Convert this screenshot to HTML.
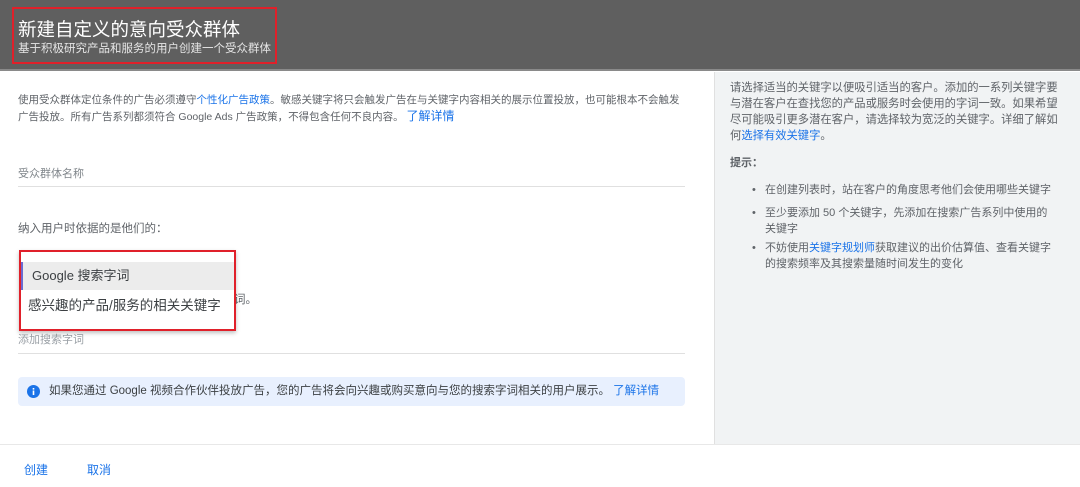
<!DOCTYPE html>
<html><head><meta charset="utf-8"><style>
*{margin:0;padding:0;box-sizing:border-box}
body{width:1080px;height:487px;overflow:hidden;background:#fff;font-family:"Liberation Sans","Noto Sans CJK SC",sans-serif;color:#5f6368;position:relative}
.hdr{position:absolute;left:0;top:0;width:1080px;height:71px;background:#5f5f5f;border-bottom:2px solid #8a8a8a}
.hbox{position:absolute;left:12px;top:7px;width:265px;height:57px;border:2px solid #e0202a}
.t1{position:absolute;left:18px;top:16px;font-size:18.5px;color:#fff;white-space:nowrap}
.t2{position:absolute;left:18px;top:40px;font-size:11.5px;color:#e6e6e6;white-space:nowrap}
.side{position:absolute;left:714px;top:72px;width:366px;height:373px;background:#f1f3f4;border-left:1px solid #e0e0e0}
.a{color:#1a73e8}
.p{position:absolute;font-size:11px;line-height:17px;white-space:nowrap}
.line{position:absolute;left:18px;width:667px;height:1px;background:#e0e0e0}
.foot{position:absolute;left:0;top:444px;width:1080px;height:1px;background:#e8e8e8}
.dd{position:absolute;left:19px;top:250px;width:217px;height:81px;background:#fff;border:2px solid #e0202a;box-shadow:0 2px 4px rgba(0,0,0,.25)}
.sel{position:absolute;left:0;top:10px;width:213px;height:28px;background:#ececec;border-left:2px solid #6b6bd0}
.info{position:absolute;left:18px;top:377px;width:667px;height:29px;background:#e8f0fe;border-radius:4px}
</style></head><body>
<div class="hdr"><div class="hbox"></div><div class="t1">新建自定义的意向受众群体</div><div class="t2">基于积极研究产品和服务的用户创建一个受众群体</div></div>
<div class="p" style="left:18px;top:92px;font-size:10.5px">使用受众群体定位条件的广告必须遵守<span class="a">个性化广告政策</span>。敏感关键字将只会触发广告在与关键字内容相关的展示位置投放，也可能根本不会触发</div>
<div class="p" style="left:18px;top:108px;font-size:10.5px">广告投放。所有广告系列都须符合 Google Ads 广告政策，不得包含任何不良内容。 <span class="a" style="font-size:12px">了解详情</span></div>
<div class="p" style="left:18px;top:166px;color:#80868b">受众群体名称</div>
<div class="line" style="top:186px"></div>
<div class="p" style="left:18px;top:221px;font-size:11.5px">纳入用户时依据的是他们的：</div>
<div class="p" style="left:234px;top:292px;font-size:11.5px">词。</div>
<div class="p" style="left:18px;top:332px;color:#9aa0a6">添加搜索字词</div>
<div class="line" style="top:353px"></div>
<div class="dd"><div class="sel"></div>
<div class="p" style="left:11px;top:15px;font-size:13px;color:#3c4043">Google 搜索字词</div>
<div class="p" style="left:7px;top:45px;font-size:13.5px;color:#3c4043">感兴趣的产品/服务的相关关键字</div></div>
<div class="info"><svg style="position:absolute;left:9px;top:8px" width="13" height="13" viewBox="0 0 13 13"><circle cx="6.5" cy="6.5" r="6.5" fill="#1a73e8"/><rect x="5.7" y="5.5" width="1.6" height="4.5" fill="#fff"/><rect x="5.7" y="3" width="1.6" height="1.6" fill="#fff"/></svg>
<div class="p" style="left:31px;top:6px;font-size:11.5px;color:#3c4043">如果您通过 Google 视频合作伙伴投放广告，您的广告将会向兴趣或购买意向与您的搜索字词相关的用户展示。 <span class="a">了解详情</span></div></div>
<div class="side">
<div class="p" style="left:15px;top:8px;font-size:11.3px;line-height:16px">请选择适当的关键字以便吸引适当的客户。添加的一系列关键字要<br>与潜在客户在查找您的产品或服务时会使用的字词一致。如果希望<br>尽可能吸引更多潜在客户，请选择较为宽泛的关键字。详细了解如<br>何<span class="a">选择有效关键字</span>。</div>
<div class="p" style="left:15px;top:83px;font-weight:bold">提示：</div>
<div class="p" style="left:50px;top:110px;line-height:16px">在创建列表时，站在客户的角度思考他们会使用哪些关键字</div>
<div class="p" style="left:50px;top:133px;line-height:16px">至少要添加 50 个关键字，先添加在搜索广告系列中使用的<br>关键字</div>
<div class="p" style="left:50px;top:168px;line-height:16px">不妨使用<span class="a">关键字规划师</span>获取建议的出价估算值、查看关键字<br>的搜索频率及其搜索量随时间发生的变化</div>
<div class="p" style="left:37px;top:110px">•</div><div class="p" style="left:37px;top:133px">•</div><div class="p" style="left:37px;top:168px">•</div>
</div>
<div class="foot"></div>
<div class="p a" style="left:24px;top:462px;font-size:12px">创建</div>
<div class="p a" style="left:87px;top:462px;font-size:12px">取消</div>
</body></html>
